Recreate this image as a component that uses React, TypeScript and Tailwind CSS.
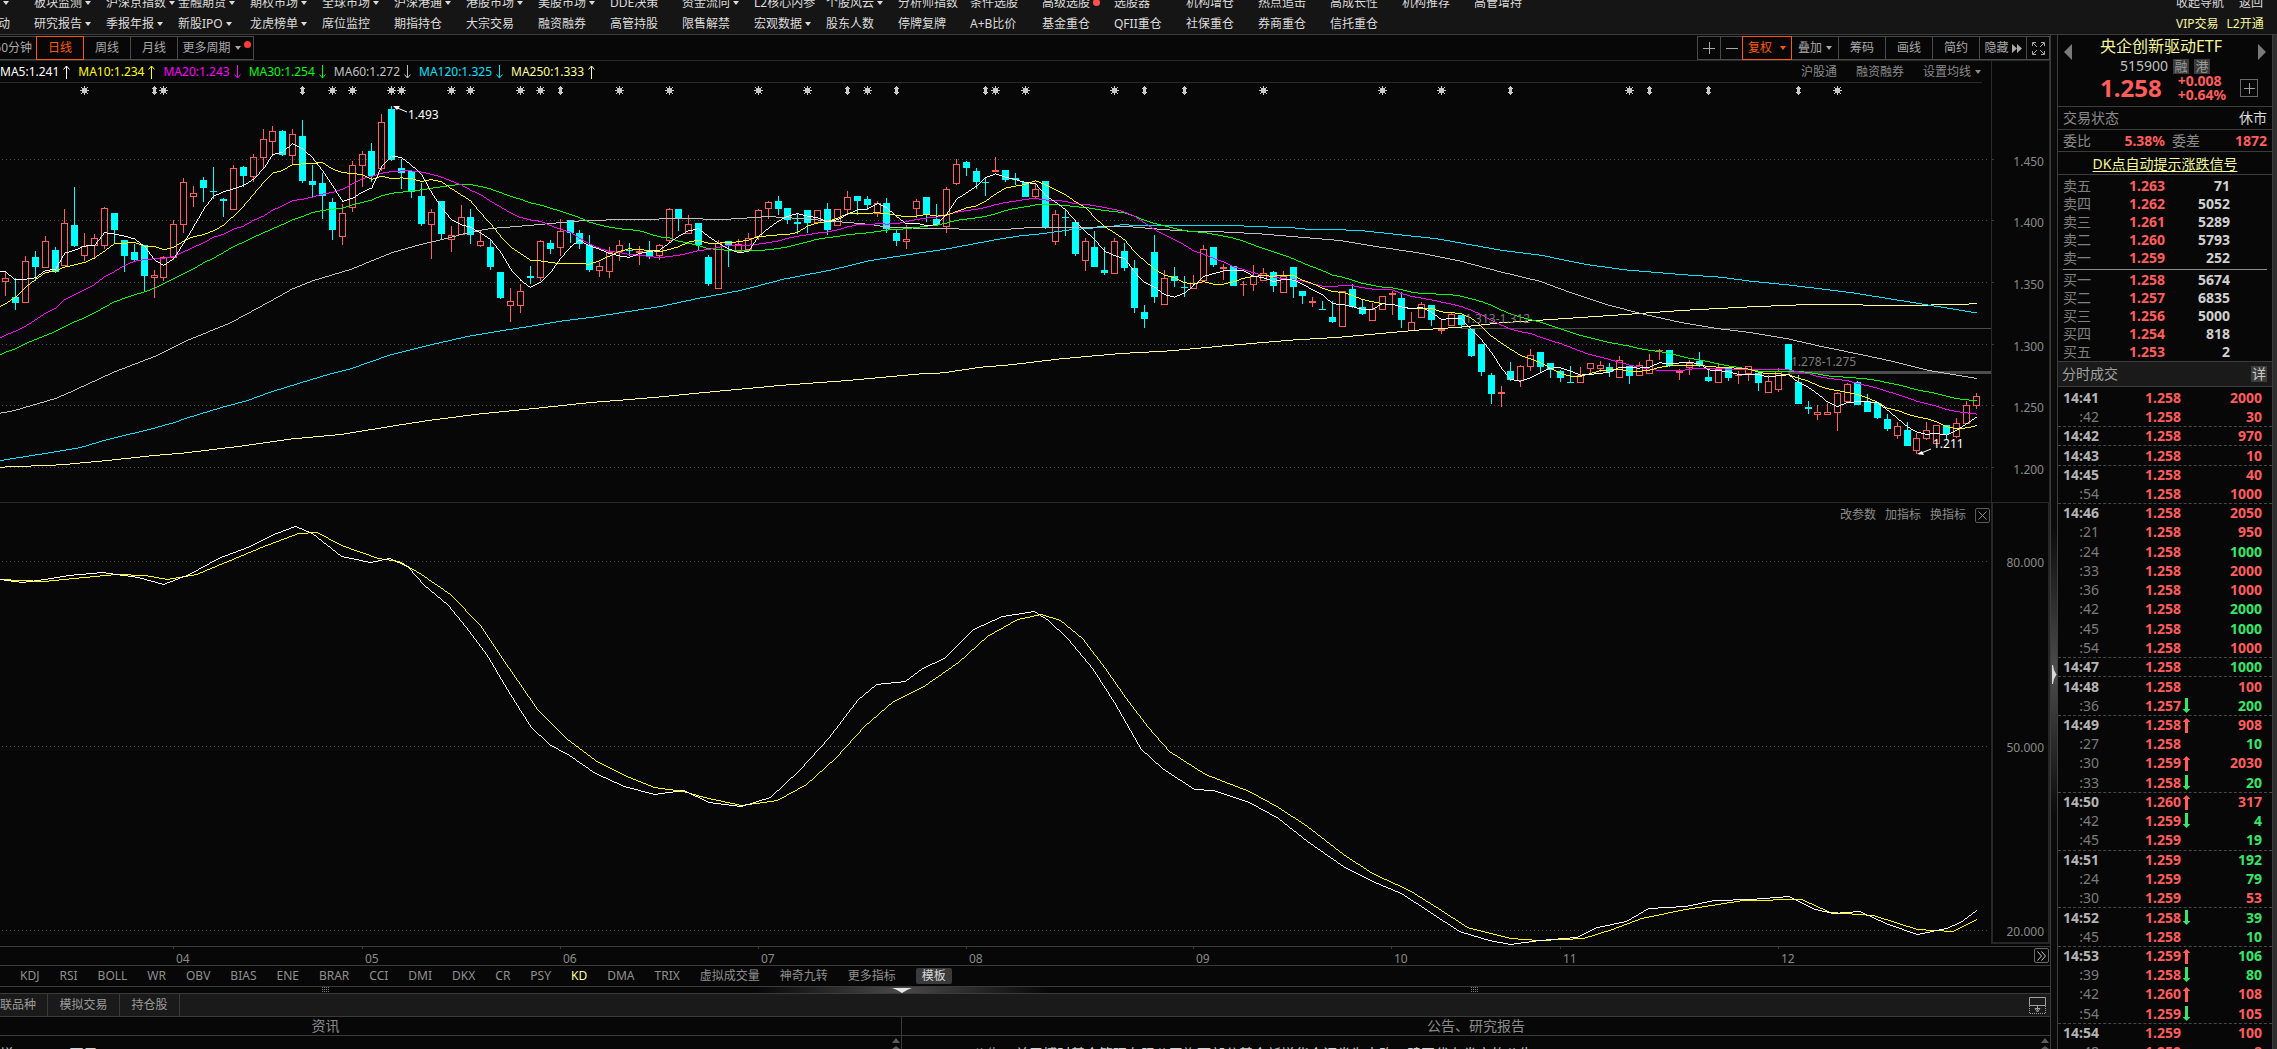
import React from "react";

type Dir = "" | "v";
type NavItem = [string, Dir?, boolean?];

const NAV_TOP: NavItem[] = [
  ["板块监测", "v"], ["沪深京指数", "v"], ["金融期货", "v"], ["期权市场", "v"], ["全球市场", "v"],
  ["沪深港通", "v"], ["港股市场", "v"], ["美股市场", "v"], ["DDE决策"], ["资金流向", "v"],
  ["L2核心内参"], ["个股风云", "v"], ["分析师指数"], ["条件选股"], ["高级选股", "", true],
  ["选股器"], ["机构增仓"], ["热点追击"], ["高成长性"], ["机构推荐"], ["高管增持"],
];
const NAV_BOTTOM: NavItem[] = [
  ["研究报告", "v"], ["季报年报", "v"], ["新股IPO", "v"], ["龙虎榜单", "v"], ["席位监控"],
  ["期指持仓"], ["大宗交易"], ["融资融券"], ["高管持股"], ["限售解禁"],
  ["宏观数据", "v"], ["股东人数"], ["停牌复牌"], ["A+B比价"], ["基金重仓"],
  ["QFII重仓"], ["社保重仓"], ["券商重仓"], ["信托重仓"],
];

/* Candles: [high, body top, body bottom, low, rising]. Values are thirds of a pixel below the pane top. */
const CANDLES: [number, number, number, number, 0 | 1][] = [
  [576,594,606,648,1],[594,651,669,690,0],[528,543,669,669,1],[513,531,561,603,0],[468,483,564,564,1],
  [501,510,576,579,0],[387,429,558,558,1],[321,435,498,501,0],[459,498,528,543,1],[462,474,498,534,1],
  [381,384,498,507,1],[399,399,450,489,0],[480,480,528,576,0],[492,516,540,546,0],[495,495,588,633,0],
  [570,585,594,654,1],[528,531,594,603,1],[420,432,534,540,1],[294,306,435,459,1],[318,339,351,381,1],
  [291,300,324,366,0],[261,333,336,357,0],[354,357,363,411,0],[255,264,390,390,1],[258,261,288,321,0],
  [222,231,291,306,1],[147,177,234,264,1],[138,153,186,222,1],[150,153,225,228,0],[147,162,228,252,1],
  [120,168,303,309,0],[255,303,315,354,0],[279,309,348,417,0],[354,366,450,480,0],[372,399,471,495,1],
  [243,255,384,396,1],[213,222,258,321,1],[189,213,288,306,0],[102,126,267,273,1],[78,87,240,243,0],
  [237,264,279,327,0],[270,273,336,354,0],[309,348,432,438,0],[387,396,435,537,1],[363,363,462,477,0],
  [438,465,480,516,1],[375,411,465,465,1],[387,411,465,492,0],[450,483,498,501,1],[477,501,561,570,0],
  [576,576,654,657,0],[624,663,678,726,1],[612,633,678,699,1],[558,588,594,612,0],[480,483,594,603,1],
  [480,489,507,522,0],[417,453,504,528,1],[420,420,459,489,0],[450,459,492,507,0],[465,495,570,576,0],
  [546,558,573,591,1],[501,516,576,594,1],[480,495,516,543,1],[489,510,513,528,0],[498,513,519,555,1],
  [483,513,528,537,0],[492,495,528,540,1],[384,387,483,489,1],[387,387,414,453,0],[405,432,462,462,1],
  [429,429,495,513,0],[525,531,612,618,0],[480,489,627,627,1],[483,483,495,561,0],[477,492,516,516,1],
  [459,474,510,516,1],[387,390,471,480,1],[363,366,387,417,1],[348,363,387,405,0],[384,384,420,432,0],
  [402,426,432,462,0],[390,390,429,459,0],[390,390,429,432,1],[369,387,450,465,0],[387,387,438,438,1],
  [333,351,390,402,1],[348,348,363,405,0],[348,357,375,390,0],[363,369,402,411,1],[354,369,447,459,0],
  [447,459,483,498,0],[435,477,486,507,1],[357,363,387,414,1],[351,351,405,426,0],[372,417,435,435,0],
  [321,327,441,459,1],[237,252,312,315,1],[243,246,264,288,0],[264,273,306,327,0],[294,306,309,348,0],
  [231,270,276,276,1],[270,270,300,306,0],[279,294,300,315,0],[306,306,351,351,0],[312,327,351,354,1],
  [303,303,444,447,0],[390,402,486,495,1],[387,411,414,468,0],[426,426,522,528,0],[474,483,543,573,1],
  [453,501,561,561,0],[501,570,579,585,0],[474,483,582,582,1],[489,513,564,573,0],[540,564,684,699,0],
  [675,696,717,744,0],[465,516,651,669,0],[570,594,675,675,1],[561,588,603,621,0],[588,621,624,651,0],
  [585,609,627,627,1],[495,507,603,606,1],[501,501,555,561,0],[552,561,567,600,1],[558,558,618,618,0],
  [603,612,615,648,1],[555,588,615,633,1],[564,579,603,603,1],[573,576,618,636,0],[573,588,639,639,1],
  [561,561,621,654,0],[633,633,648,672,0],[651,663,669,681,1],[663,687,690,690,0],[663,711,726,729,0],
  [633,633,741,741,1],[612,627,681,684,0],[657,681,702,705,0],[669,687,723,723,1],[648,648,690,690,1],
  [633,639,645,705,1],[636,654,720,744,0],[696,726,753,753,1],[666,672,714,714,1],[675,675,720,738,0],
  [720,747,753,762,1],[699,702,738,738,1],[705,705,735,744,0],[747,747,828,831,0],[792,792,876,888,0],
  [879,885,942,972,0],[918,936,942,981,1],[846,873,900,903,0],[855,858,903,921,1],[807,825,861,873,1],
  [816,816,861,876,0],[849,849,870,894,0],[870,873,894,906,0],[858,906,909,909,0],[861,885,909,909,1],
  [849,849,867,882,1],[843,855,867,876,1],[849,861,876,891,0],[828,840,894,894,1],[858,858,888,912,0],
  [846,855,888,888,1],[822,840,882,882,1],[807,810,813,840,1],[810,810,858,861,0],[867,873,879,900,1],
  [840,849,864,885,1],[816,843,858,861,0],[867,891,903,906,0],[849,867,909,909,1],[861,861,894,903,0],
  [873,885,888,912,1],[858,858,882,903,1],[879,879,909,933,0],[885,903,939,939,1],[864,873,930,936,1],
  [792,792,870,870,0],[885,906,972,972,0],[963,981,987,1002,0],[975,996,1005,1020,1],[969,996,1005,1005,1],
  [936,939,999,1053,1],[909,912,966,966,1],[903,906,975,975,0],[942,963,996,996,0],[969,969,1014,1017,0],
  [1002,1017,1047,1053,0],[1026,1038,1068,1077,1],[1026,1050,1098,1098,0],[1059,1074,1113,1122,1],[1026,1050,1077,1080,1],
  [1035,1035,1092,1092,1],[1035,1035,1062,1077,0],[1014,1029,1071,1074,1],[963,975,1032,1032,1],[939,948,978,987,1],
];

const candleX = (i: number) => Math.round(5 + i * 9.904);
const px = (v: number) => Math.round(v / 3);
const CLOSES = CANDLES.map((c) => (c[4] ? c[1] : c[2]));

/* Turns [x, y, x, y, ...] into a path of whole-pixel runs, so a curve is exactly one pixel thick. */
function trace(pts: number[]): string {
  const last = pts[pts.length - 2];
  let seg = 0;
  let prev = Math.round(pts[1]);
  let runStart = pts[0];
  let d = "";
  for (let x = pts[0]; x <= last; x++) {
    while (seg + 4 < pts.length && x > pts[seg + 2]) seg += 2;
    const [x0, y0, x1, y1] = pts.slice(seg, seg + 4);
    const y = Math.round(y0 + ((y1 - y0) * (x - x0)) / (x1 - x0));
    if (y !== prev) {
      d += `M${runStart} ${prev}H${x}v1H${runStart}z`;
      if (y > prev + 1) d += `M${x} ${prev + 1}h1V${y}h-1z`;
      if (y < prev - 1) d += `M${x} ${y + 1}h1V${prev}h-1z`;
      runStart = x;
      prev = y;
    }
  }
  return d + `M${runStart} ${prev}H${last + 1}v1H${runStart}z`;
}

/* Average of the last n closes; `seed` covers the candles that lack n predecessors. */
function movingAverage(n: number, startY: number, seed: number[]): string {
  const pts = [0, startY];
  CLOSES.forEach((_, i) => {
    const v = i < n - 1 ? seed[i] : CLOSES.slice(i - n + 1, i + 1).reduce((a, b) => a + b, 0) / n;
    pts.push(candleX(i), v / 3);
  });
  return trace(pts);
}
const MA5 = movingAverage(5, 191, [574, 598, 596, 592]);
const MA10 = movingAverage(10, 226, [670, 650, 620, 597, 576, 571, 560, 553, 546]);
const MA20 = movingAverage(20, 257, [764, 752, 737, 718, 698, 684, 657, 642, 627, 612, 589, 573, 555, 542, 537, 535, 533, 528, 514]);
const MA30 = movingAverage(30, 274, [815, 805, 789, 777, 765, 753, 738, 724, 712, 697, 680, 664, 653, 643, 634, 623, 609, 595, 580, 565, 547, 533, 516, 498, 485, 470, 457, 445, 432]);

const traceThirds = (pts: number[]) => trace(pts.map((v, i) => (i % 2 ? v / 3 : v)));
const MA60 = traceThirds([0,998,14,990,55,954,66,940,114,874,154,828,185,782,230,727,270,662,292,625,313,600,350,567,391,517,420,492,440,478,470,455,490,444,520,437,546,430,580,421,610,418,640,417,665,415,700,415,715,418,740,414,767,408,800,414,840,424,870,432,890,441,950,445,1000,448,1030,441,1070,442,1123,437,1150,444,1180,451,1220,454,1260,460,1300,470,1340,480,1380,500,1420,518,1460,542,1500,574,1539,602,1571,637,1607,673,1643,701,1679,725,1714,743,1750,756,1786,774,1821,798,1857,820,1893,843,1929,870,1976,894]);
const MA120 = traceThirds([0,1140,55,1114,80,1101,107,1077,150,1046,175,1025,185,1014,222,980,245,962,270,935,300,907,330,880,350,865,391,822,430,793,470,766,500,751,520,742,560,722,590,711,630,692,660,678,697,654,740,630,783,596,830,569,870,540,920,517,943,507,1000,475,1020,466,1040,460,1070,448,1110,438,1120,433,1170,436,1240,436,1260,439,1290,441,1310,447,1357,449,1400,463,1437,475,1480,498,1500,509,1540,524,1586,552,1625,568,1680,582,1720,590,1750,602,1790,614,1850,636,1900,660,1935,677,1976,697]);
const MA250 = traceThirds([0,1160,60,1153,107,1140,150,1126,185,1117,240,1097,292,1075,340,1062,400,1033,430,1019,480,1000,520,988,540,982,590,966,633,956,660,949,700,937,783,914,847,900,920,880,943,877,980,860,1010,853,1060,835,1120,819,1170,811,1220,797,1290,779,1340,770,1420,748,1460,740,1500,727,1520,723,1560,715,1620,703,1680,690,1750,679,1800,673,1925,674,1960,671,1976,670]);

const STARS = [8,16,33,35,39,40,45,47,52,54,62,67,76,81,87,100,103,112,127,139,145,164,185];
const SPLITS = [15,30,56,85,90,99,115,119,152,166,172,181];

const K_LINE = trace([0,76,22,79,44,76,68,72,102,69,138,74,163,81,189,71,218,55,247,44,276,30,295,23,312,30,341,53,356,56,370,59,389,55,407,63,424,82,447,101,465,123,486,151,508,188,530,223,549,241,569,252,595,270,624,283,654,291,683,287,709,299,741,303,770,294,799,267,828,235,857,197,876,181,905,178,922,165,944,155,973,126,1002,113,1034,108,1048,117,1067,135,1092,165,1115,201,1140,245,1162,265,1194,286,1213,287,1249,299,1278,315,1307,338,1343,363,1372,378,1401,390,1430,409,1459,428,1489,437,1510,441,1539,437,1576,434,1597,424,1626,418,1648,405,1685,403,1714,397,1750,396,1789,393,1815,406,1833,410,1859,408,1888,421,1917,431,1946,425,1960,419,1976,407]);
const D_LINE = trace([0,76,44,78,73,75,116,71,145,72,167,76,196,71,225,59,261,44,298,30,317,29,341,42,378,55,399,58,421,71,450,91,479,121,508,164,537,206,566,235,595,257,624,272,654,284,683,288,704,294,741,302,777,297,806,281,835,255,864,223,893,198,922,184,958,159,987,133,1017,116,1041,111,1060,117,1082,135,1104,164,1125,194,1147,223,1169,248,1205,271,1249,288,1278,304,1307,323,1343,351,1372,370,1409,387,1438,405,1467,424,1510,435,1539,437,1583,435,1612,426,1641,415,1685,406,1743,397,1801,396,1830,409,1873,412,1917,426,1953,428,1976,416]);

const MONTHS: [string, number][] = [["04",173],["05",362],["06",560],["07",758],["08",966],["09",1193],["10",1391],["11",1560],["12",1778]];

const ASKS = [["卖五","1.263","71"],["卖四","1.262","5052"],["卖三","1.261","5289"],["卖二","1.260","5793"],["卖一","1.259","252"]];
const BIDS = [["买一","1.258","5674"],["买二","1.257","6835"],["买三","1.256","5000"],["买四","1.254","818"],["买五","1.253","2"]];

/* Trades: [time, price, volume, volume side, price move] */
type Trade = [string, string, string, "r" | "g", ("u" | "d")?];
const TRADES: Trade[] = [
  ["14:41","1.258","2000","r"],[":42","1.258","30","r"],["14:42","1.258","970","r"],["14:43","1.258","10","r"],
  ["14:45","1.258","40","r"],[":54","1.258","1000","r"],["14:46","1.258","2050","r"],[":21","1.258","950","r"],
  [":24","1.258","1000","g"],[":33","1.258","2000","r"],[":36","1.258","1000","r"],[":42","1.258","2000","g"],
  [":45","1.258","1000","g"],[":54","1.258","1000","r"],["14:47","1.258","1000","g"],["14:48","1.258","100","r"],
  [":36","1.257","200","g","d"],["14:49","1.258","908","r","u"],[":27","1.258","10","g"],[":30","1.259","2030","r","u"],
  [":33","1.258","20","g","d"],["14:50","1.260","317","r","u"],[":42","1.259","4","g","d"],[":45","1.259","19","g"],
  ["14:51","1.259","192","g"],[":24","1.259","79","g"],[":30","1.259","53","r"],["14:52","1.258","39","g","d"],
  [":45","1.258","10","g"],["14:53","1.259","106","g","u"],[":39","1.258","80","g","d"],[":42","1.260","108","r","u"],
  [":54","1.259","105","r","d"],["14:54","1.259","100","r"],[":48","1.259","8","r"],
];

function Caret({ className = "" }: { className?: string }) {
  return (
    <svg width="6" height="4" viewBox="0 0 6 4" className={`shrink-0 ${className}`} fill="currentColor" aria-hidden="true">
      <path d="M0 0h6L3 4z" />
    </svg>
  );
}

function NavRow({ lead, items }: { lead: React.ReactNode; items: NavItem[] }) {
  return (
    <div className="flex h-[21px] items-center">
      <div className="flex w-[34px] shrink-0 items-center">{lead}</div>
      {items.map(([label, caret, dot]) => (
        <button key={label} type="button" className="flex w-[72px] shrink-0 items-center gap-[3px] whitespace-nowrap">
          {label}
          {caret && <Caret />}
          {dot && <span className="size-[7px] rounded-full bg-[#ff5050]" />}
        </button>
      ))}
    </div>
  );
}

function TopNav() {
  return (
    <header className="flex h-[35px] shrink-0 items-end justify-between overflow-hidden border-b border-[#3c3c3c] bg-[#151515] text-[#dcdcdc]">
      <nav className="min-w-0">
        <NavRow lead={<Caret className="ml-[3px]" />} items={NAV_TOP} />
        <NavRow lead={<span className="-ml-0.5">动</span>} items={NAV_BOTTOM} />
      </nav>
      <div className="w-[101px] shrink-0">
        <div className="flex h-[21px] items-center gap-[15px]">
          <button type="button">收起导航</button>
          <button type="button">返回</button>
        </div>
        <div className="flex h-[21px] items-center gap-2 text-[#f6f69b]">
          <a href="#vip">VIP交易</a>
          <a href="#l2">L2开通</a>
        </div>
      </div>
    </header>
  );
}

const TOOL = "-ml-px flex h-6 items-center justify-center border whitespace-nowrap";
const TOOL_IDLE = "border-[#4a4a4a] text-[#a8a8a8]";
const TOOL_ON = "relative z-10 border-[#ff5a00] text-[#ff5a00]";

function Toolbar() {
  return (
    <div className="flex h-[26px] shrink-0 items-start justify-between border-b border-[#2a2a2a] pt-px">
      <div className="flex">
        <button type="button" className={`${TOOL} ${TOOL_IDLE} w-[38px] justify-end border-l-0 pr-1`}>60分钟</button>
        <button type="button" className={`${TOOL} ${TOOL_ON} w-12`}>日线</button>
        <button type="button" className={`${TOOL} ${TOOL_IDLE} w-12`}>周线</button>
        <button type="button" className={`${TOOL} ${TOOL_IDLE} w-12`}>月线</button>
        <button type="button" className={`${TOOL} ${TOOL_IDLE} relative w-[77px] gap-1 pr-2`}>
          更多周期
          <Caret />
          <span className="absolute top-1 right-0.5 size-[7px] rounded-full bg-[#ff3c3c]" />
        </button>
      </div>
      <div className="flex">
        <button type="button" aria-label="放大" className={`${TOOL} ${TOOL_IDLE} w-6`}>
          <svg width="12" height="12" viewBox="0 0 12 12" stroke="currentColor" aria-hidden="true"><path d="M0 6.5h12M6.5 0v12" /></svg>
        </button>
        <button type="button" aria-label="缩小" className={`${TOOL} ${TOOL_IDLE} w-[23px]`}>
          <svg width="12" height="12" viewBox="0 0 12 12" stroke="currentColor" aria-hidden="true"><path d="M0 6.5h12" /></svg>
        </button>
        <button type="button" className={`${TOOL} ${TOOL_ON} w-[50px] gap-2`}>复权<Caret /></button>
        <button type="button" className={`${TOOL} ${TOOL_IDLE} w-12 gap-1`}>叠加<Caret /></button>
        <button type="button" className={`${TOOL} ${TOOL_IDLE} w-12`}>筹码</button>
        <button type="button" className={`${TOOL} ${TOOL_IDLE} w-12`}>画线</button>
        <button type="button" className={`${TOOL} ${TOOL_IDLE} w-12`}>简约</button>
        <button type="button" className={`${TOOL} ${TOOL_IDLE} w-12 gap-[3px]`}>
          隐藏
          <svg width="10" height="9" viewBox="0 0 10 9" fill="currentColor" aria-hidden="true"><path d="M0 0l5 4.5L0 9zM5 0l5 4.5L5 9z" /></svg>
        </button>
        <button type="button" aria-label="全屏" className={`${TOOL} ${TOOL_IDLE} w-6`}>
          <svg width="13" height="13" viewBox="0 0 13 13" fill="none" stroke="currentColor" aria-hidden="true">
            <path d="M.5 4V.5H4M9 .5h3.500V4M12.500 9v3.500H9M4 12.500H.5V9M1 1l4 4M12 1L8 5M12 12L8 8M1 12l4-4" />
          </svg>
        </button>
      </div>
    </div>
  );
}

const LEGEND: [string, string, boolean][] = [
  ["MA5:1.241", "text-white", true],
  ["MA10:1.234", "text-[#ffff00]", true],
  ["MA20:1.243", "text-[#ff00ff]", false],
  ["MA30:1.254", "text-[#00ff00]", false],
  ["MA60:1.272", "text-[#c0c0c0]", false],
  ["MA120:1.325", "text-[#00e5ff]", false],
  ["MA250:1.333", "text-[#ffff99]", true],
];

function Legend() {
  return (
    <div className="mr-[9px] flex h-[22px] items-center justify-between border-b border-[#2a2a2a]">
      <div className="flex gap-2">
        {LEGEND.map(([label, color, up]) => (
          <span key={label} className={`flex items-center gap-1 ${color}`}>
            {label}
            <svg width="7" height="14" viewBox="0 0 7 14" fill="none" stroke="currentColor" aria-hidden="true">
              <path d={up ? "M3.500 14V1M.5 4.500L3.500 1L6.500 4.500" : "M3.500 0V13M.5 9.500L3.500 13L6.500 9.500"} />
            </svg>
          </span>
        ))}
      </div>
      <div className="flex items-center pr-px text-[#8a8a8a]">
        <button type="button">沪股通</button>
        <button type="button" className="ml-[19px]">融资融券</button>
        <button type="button" className="ml-[19px] flex items-center gap-1">设置均线<Caret /></button>
      </div>
    </div>
  );
}

const GRID_Y = [79, 140, 202, 264, 325, 387];
const PRICES = ["1.450", "1.400", "1.350", "1.300", "1.250", "1.200"];

function PriceChart() {
  return (
    <svg className="block h-[419px] w-full" viewBox="0 3 1991 419" preserveAspectRatio="xMaxYMin slice" fontSize="12" role="img" aria-label="日K线图">
      <g shapeRendering="crispEdges">
        {GRID_Y.map((y) => (
          <line key={y} x1="2" x2="1988" y1={y + 0.5} y2={y + 0.5} stroke="#4e4e4e" strokeDasharray="1 3" />
        ))}
        {CANDLES.map(([hi, top, bottom, lo, rising], i) => {
          const x = candleX(i);
          const t = px(top);
          const h = Math.max(1, px(bottom) - t);
          if (!rising) {
            return (
              <g key={i} fill="#00ffff">
                <rect x={x} y={px(hi)} width="1" height={px(lo) - px(hi)} />
                <rect x={x - 3} y={t} width="7" height={h} />
              </g>
            );
          }
          return (
            <g key={i} fill="#ff5c5c">
              {top > hi && <rect x={x} y={px(hi)} width="1" height={t - px(hi)} />}
              {lo > bottom && <rect x={x} y={px(bottom)} width="1" height={px(lo) - px(bottom)} />}
              {h < 3 ? (
                <rect x={x - 3} y={t} width="7" height={h} />
              ) : (
                <rect x={x - 2.5} y={t + 0.5} width="6" height={h - 1} fill="none" stroke="#ff5c5c" />
              )}
            </g>
          );
        })}
      </g>
      <rect x="1461" y="248" width="530" height="1" fill="#4c4c4c" />
      <rect x="1788" y="291" width="203" height="3" fill="#4c4c4c" />
      <g shapeRendering="crispEdges">
        <path d={MA250} fill="#ffff99" />
        <path d={MA120} fill="#00e5ff" />
        <path d={MA60} fill="#c0c0c0" />
        <path d={MA30} fill="#00ff00" />
        <path d={MA20} fill="#ff00ff" />
        <path d={MA10} fill="#ffff00" />
        <path d={MA5} fill="#ffffff" />
      </g>
      <g fill="#7c7c7c">
        <text x="1465" y="243">1.313-1.312</text>
        <text x="1791" y="286">1.278-1.275</text>
      </g>
      <g fill="#c8c8c8" shapeRendering="crispEdges">
        {STARS.map((i) => (
          <path key={i} transform={`translate(${candleX(i) - 4} 6)`} d="M4 0h1v9h-1zM0 4h9v1h-9zM2 2h5v5h-5zM1 1h1v1h-1zM7 1h1v1h-1zM1 7h1v1h-1zM7 7h1v1h-1z" />
        ))}
        {SPLITS.map((i) => (
          <path key={i} transform={`translate(${candleX(i) - 2} 6)`} d="M2 0h1v9h-1zM1 1h3v7h-3zM0 2h5v1h-5zM0 6h5v1h-5z" />
        ))}
      </g>
      <g stroke="#ffffff" fill="#ffffff">
        <path d="M395 27L407 32" />
        <path stroke="none" d="M393 26h7l-3 4z" />
        <path d="M1919 374L1931 369" />
        <path stroke="none" d="M1917 374l5-3 2 4z" />
      </g>
      <g fill="#ffffff">
        <text x="408" y="39">1.493</text>
        <text x="1933" y="368">1.211</text>
      </g>
    </svg>
  );
}

function PriceAxis() {
  return (
    <svg className="mt-[22px] block h-[419px] w-[57px]" viewBox="0 3 57 419" fontSize="12" fill="#8a8a8a" textAnchor="end" aria-hidden="true">
      {GRID_Y.map((y, i) => (
        <g key={y}>
          <rect x="0" y={y} width="2" height="1" fill="#3a3a3a" />
          <text x="52" y={y + 7}>{PRICES[i]}</text>
        </g>
      ))}
    </svg>
  );
}

const KD_Y = [58, 243, 427];

function KdPane() {
  return (
    <div className="flex min-h-0 flex-1">
      <div className="relative min-w-0 flex-1">
        <svg className="block h-full w-full" viewBox="0 0 1991 443" preserveAspectRatio="xMaxYMin slice" role="img" aria-label="KD指标">
          <g shapeRendering="crispEdges">
            {KD_Y.map((y) => (
              <line key={y} x1="2" x2="1988" y1={y + 0.5} y2={y + 0.5} stroke="#4e4e4e" strokeDasharray="1 3" />
            ))}
            <path d={D_LINE} fill="#ffff00" />
            <path d={K_LINE} fill="#ffffff" />
          </g>
        </svg>
        <div className="absolute top-1 right-px flex items-center gap-[9px] text-[#8a8a8a]">
          <button type="button">改参数</button>
          <button type="button">加指标</button>
          <button type="button">换指标</button>
          <button type="button" aria-label="关闭" className="flex size-[15px] items-center justify-center rounded-xs border border-[#5a5a5a]">
            <svg width="9" height="9" viewBox="0 0 9 9" stroke="currentColor" aria-hidden="true"><path d="M.5 .5l8 8M8.500 .5l-8 8" /></svg>
          </button>
        </div>
      </div>
      <div className="mb-0.5 w-[59px] border-2 border-t-0 border-[#262626]">
        <svg className="block h-full w-full" viewBox="0 0 55 439" preserveAspectRatio="xMaxYMin slice" fontSize="12" fill="#8a8a8a" textAnchor="end" aria-hidden="true">
          <text x="51" y="64">80.000</text>
          <text x="51" y="249">50.000</text>
          <text x="51" y="433">20.000</text>
        </svg>
      </div>
    </div>
  );
}

function TimeAxis() {
  return (
    <div className="flex h-5 shrink-0 items-start border-t border-b border-[#3a3a3a] text-[#8a8a8a]">
      <svg className="h-[18px] min-w-0 flex-1" viewBox="0 0 2034 18" preserveAspectRatio="xMaxYMin slice" fontSize="12" fill="#8a8a8a" aria-hidden="true">
        {MONTHS.map(([m, x]) => (
          <g key={m}>
            <rect x={x} y="0" width="1" height="2" fill="#3a3a3a" />
            <text x={x + 3} y="16">{m}</text>
          </g>
        ))}
      </svg>
      <button type="button" aria-label="后移" className="mt-px mr-px flex size-[15px] items-center justify-center rounded-xs border border-[#6a6a6a] text-[#cccccc]">
        <svg width="9" height="10" viewBox="0 0 9 10" fill="none" stroke="currentColor" aria-hidden="true"><path d="M.5 .5L4.500 5l-4 4.500M4.500 .5L8.500 5l-4 4.500" /></svg>
      </button>
    </div>
  );
}

const INDICATORS = ["KDJ","RSI","BOLL","WR","OBV","BIAS","ENE","BRAR","CCI","DMI","DKX","CR","PSY","KD","DMA","TRIX","虚拟成交量","神奇九转","更多指标"];

function IndicatorTabs() {
  return (
    <div className="flex h-[21px] shrink-0 items-center gap-5 border-b border-[#3a3a3a] pl-5 text-[#8f8f8f]">
      {INDICATORS.map((n) => (
        <button key={n} type="button" className={n === "KD" ? "text-[#ffff99]" : "hover:text-white"}>{n}</button>
      ))}
      <button type="button" className="h-4 rounded-xs bg-[#3a3a3a] px-1.5 leading-4 text-[#d8d8d8]">模板</button>
    </div>
  );
}

function Grip() {
  return (
    <svg width="8" height="5" viewBox="0 0 8 5" stroke="#7a7a7a" strokeDasharray="1 1" aria-hidden="true"><path d="M0 .5h8M0 2.500h8M0 4.500h8" /></svg>
  );
}

function Splitter() {
  return (
    <div className="relative flex h-[7px] shrink-0 justify-center border-b border-[#3a3a3a]">
      <div className="absolute inset-y-0 left-[322px]"><Grip /></div>
      <div className="absolute inset-y-0 left-[756px] flex w-[292px] justify-center bg-linear-to-r from-transparent via-[#4a4a4a] to-transparent">
        <svg width="20" height="5" viewBox="0 0 20 5" fill="#e6e6e6" className="mt-px" aria-hidden="true"><path d="M0 0h20L16 1.500L10 5L4 1.500z" /></svg>
      </div>
      <div className="absolute inset-y-0 left-[1471px]"><Grip /></div>
    </div>
  );
}

function ScrollUp() {
  return (
    <svg width="8" height="13" viewBox="0 0 8 13" fill="#5c5c5c" className="absolute top-0 right-px" aria-hidden="true"><path d="M4 2l4 5H0zM4 10l4 3H0z" /></svg>
  );
}

function News() {
  return (
    <>
      <div className="flex h-[23px] shrink-0 items-stretch border-b border-[#3a3a3a] bg-[#1a1a1a] text-[#9a9a9a]">
        <button type="button" className="w-12 border-r border-[#3a3a3a] pr-[11px] text-right whitespace-nowrap">联品种</button>
        <button type="button" className="w-[72px] border-r border-[#3a3a3a]">模拟交易</button>
        <button type="button" className="w-[60px] border-r border-[#3a3a3a]">持仓股</button>
        <button type="button" aria-label="收起面板" className="mr-1 ml-auto">
          <svg width="17" height="17" viewBox="0 0 17 17" fill="none" stroke="#a0a0a0" aria-hidden="true">
            <path d="M.5 .5h16v8H.5zM8.500 8.500v5M6 11.500l2.500 3.500L11 11.500z" />
            <path strokeDasharray="1 1" d="M.5 9v7.500h16V9" />
          </svg>
        </button>
      </div>
      <div className="flex h-8 shrink-0 overflow-hidden">
        <section className="w-[902px] border-r border-[#3a3a3a]">
          <h2 className="h-[19px] border-b border-[#3a3a3a] pr-[250px] text-center text-sm leading-[18px] text-[#8a8a8a]">资讯</h2>
          <div className="relative pt-2">
            <a href="#news" className="block text-sm leading-5 whitespace-nowrap text-[#d0d0d0]">增 2814.11万元</a>
            <ScrollUp />
          </div>
        </section>
        <section className="min-w-0 flex-1">
          <h2 className="h-[19px] border-b border-[#3a3a3a] text-center text-sm leading-[18px] text-[#8a8a8a]">公告、研究报告</h2>
          <div className="relative pt-2 pl-2.5">
            <a href="#notice" className="flex text-sm leading-5 whitespace-nowrap text-[#d0d0d0]">
              <span className="w-14 text-[#9a9a9a]">12-11</span>
              <span className="w-[47px] text-[#9a9a9a]">[公告]</span>
              <span>关于博时基金管理有限公司旗下部分基金新增华金证券为申购、赎回代办券商的公告</span>
            </a>
            <ScrollUp />
          </div>
        </section>
      </div>
    </>
  );
}

function Rail() {
  return (
    <div className="relative w-1.5 shrink-0 bg-[#0a0a0a]">
      <div className="absolute inset-x-0 top-[490px] h-[290px] bg-linear-to-b from-transparent via-[#4c4c4c] to-transparent" />
      <svg width="5" height="19" viewBox="0 0 5 19" fill="#d8d8d8" className="absolute top-[630px] left-px" aria-hidden="true"><path d="M0 0h1l1 5 2.500 4.500L2 14l-1 5H0z" /></svg>
    </div>
  );
}

function BookRows({ rows }: { rows: string[][] }) {
  return (
    <tbody className="block">
      {rows.map(([label, price, vol]) => (
        <tr key={label} className="flex h-[18px] items-center text-sm leading-[18px]">
          <th scope="row" className="w-10 text-left font-normal text-[#808080]">{label}</th>
          <td className="w-[62px] text-right font-bold text-[#ff5c5c]">{price}</td>
          <td className="w-[65px] text-right font-bold text-[#d0d0d0]">{vol}</td>
        </tr>
      ))}
    </tbody>
  );
}

function Move({ dir }: { dir?: "u" | "d" }) {
  if (!dir) return null;
  return (
    <svg width="7" height="15" viewBox="0 0 7 15" fill={dir === "u" ? "#ff5c5c" : "#35e667"} aria-label={dir === "u" ? "升" : "降"}>
      <path d={dir === "u" ? "M3.500 0L7 3.500V4H5v11H2V4H0v-.5z" : "M3.500 15L7 11.500V11H5V0H2v11H0v.5z"} />
    </svg>
  );
}

function Sidebar() {
  return (
    <aside className="flex w-[216px] shrink-0 flex-col overflow-hidden border-x border-[#3c3c3c] text-sm">
      <div className="flex h-[72px] shrink-0 items-start justify-between border-b border-[#3c3c3c] px-1.5">
        <button type="button" aria-label="上一只" className="mt-[9px] shrink-0">
          <svg width="8" height="16" viewBox="0 0 8 16" fill="#7a7a7a" aria-hidden="true"><path d="M8 0v16L0 8z" /></svg>
        </button>
        <div className="flex-1">
          <div className="pr-2 text-center text-base leading-[23px] text-[#f6f69b]">央企创新驱动ETF</div>
          <div className="flex h-4 items-center justify-center gap-[5px] leading-4 text-[#c0c0c0]">
            <span>515900</span>
            <span className="w-4 bg-[#3a3a3a] text-center text-[13px] leading-[15px] text-[#9a9a9a]">融</span>
            <span className="w-4 bg-[#3a3a3a] text-center text-[13px] leading-[15px] text-[#9a9a9a]">港</span>
          </div>
          <div className="flex h-7 items-center pl-7 font-bold text-[#ff5c5c]">
            <span className="text-2xl leading-6">1.258</span>
            <span className="ml-4 flex-1 text-left leading-[14px]">+0.008<br />+0.64%</span>
            <button type="button" aria-label="加入自选" className="flex size-[18px] items-center justify-center border border-[#6a6a6a] text-[#a0a0a0]">
              <svg width="11" height="11" viewBox="0 0 11 11" stroke="currentColor" aria-hidden="true"><path d="M0 5.500h11M5.500 0v11" /></svg>
            </button>
          </div>
        </div>
        <button type="button" aria-label="下一只" className="mt-[9px] shrink-0">
          <svg width="8" height="16" viewBox="0 0 8 16" fill="#7a7a7a" aria-hidden="true"><path d="M0 0v16l8-8z" /></svg>
        </button>
      </div>
      <div className="flex h-[23px] shrink-0 items-center justify-between border-b border-[#3c3c3c] px-[5px]">
        <span className="text-[#8a8a8a]">交易状态</span>
        <span className="text-[#d8d8d8]">休市</span>
      </div>
      <div className="flex h-[22px] shrink-0 items-center border-b border-[#3c3c3c] px-[5px]">
        <span className="w-10 text-[#8a8a8a]">委比</span>
        <span className="w-[62px] text-right font-bold text-[#ff5c5c]">5.38%</span>
        <span className="ml-[7px] text-[#8a8a8a]">委差</span>
        <span className="ml-auto font-bold text-[#ff5c5c]">1872</span>
      </div>
      <div className="h-[23px] shrink-0 border-b border-[#3c3c3c] text-center leading-[23px]">
        <a href="#dk" className="text-[#f6f69b] underline underline-offset-2">DK点自动提示涨跌信号</a>
      </div>
      <table className="mx-[5px] block shrink-0 pt-0.5">
        <BookRows rows={ASKS} />
      </table>
      <div className="mx-[5px] mt-0.5 h-px shrink-0 bg-[#8a8a8a]" />
      <table className="mx-[5px] block shrink-0 pt-px">
        <BookRows rows={BIDS} />
      </table>
      <div className="flex h-[26px] shrink-0 items-center justify-between border-y border-[#3c3c3c] bg-[#1a1a1a] pr-[5px] pl-1 text-[#a0a0a0]">
        <span>分时成交</span>
        <button type="button" className="size-4 bg-[#3c3c3c] leading-4 text-[#c8c8c8]">详</button>
      </div>
      <table className="block pt-px">
        <tbody className="block">
          {TRADES.map(([time, price, vol, side, move], i) => {
            const minute = !time.startsWith(":");
            return (
              <tr key={i} className={minute && i > 0 ? "flex h-[19px] items-center border-t border-dashed border-[#484848] nth-[4n]:h-5" : "flex h-[19px] items-center nth-[4n]:h-5"}>
                <td className={minute ? "w-[41px] shrink-0 text-right font-bold text-[#b4b4b4]" : "w-[41px] shrink-0 text-right text-[#7c7c7c]"}>{time}</td>
                <td className="w-[82px] shrink-0 text-right font-bold text-[#ff5c5c]">{price}</td>
                <td className="w-5 shrink-0 pl-0.5"><Move dir={move} /></td>
                <td className={side === "r" ? "w-[61px] shrink-0 text-right font-bold text-[#ff5c5c]" : "w-[61px] shrink-0 text-right font-bold text-[#35e667]"}>{vol}</td>
              </tr>
            );
          })}
        </tbody>
      </table>
    </aside>
  );
}

export default function App() {
  return (
    <div className="flex h-screen flex-col overflow-hidden bg-[#070707] font-['Noto_Sans','Noto_Sans_CJK_SC',sans-serif] text-xs">
      <TopNav />
      <div className="flex min-h-0 flex-1">
        <main className="flex min-w-0 flex-1 flex-col overflow-hidden border-r border-[#3c3c3c]">
          <Toolbar />
          <div className="flex shrink-0 border-b border-[#2a2a2a]">
            <div className="min-w-0 flex-1">
              <Legend />
              <PriceChart />
            </div>
            <div className="w-[59px] shrink-0 border-x border-[#2a2a2a]">
              <PriceAxis />
            </div>
          </div>
          <KdPane />
          <TimeAxis />
          <IndicatorTabs />
          <Splitter />
          <News />
        </main>
        <Rail />
        <Sidebar />
        <div className="w-1 shrink-0 bg-[#2e2e2e]" />
      </div>
    </div>
  );
}
